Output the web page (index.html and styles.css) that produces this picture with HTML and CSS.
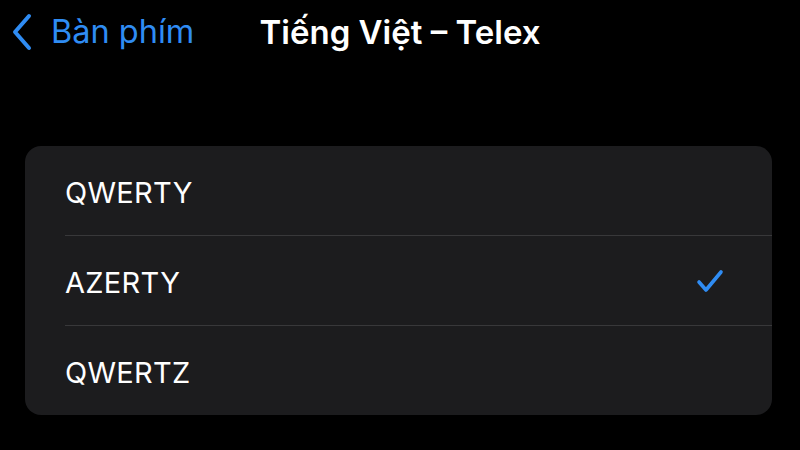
FILE: index.html
```html
<!DOCTYPE html>
<html>
  <head>
    <title>Tiếng Việt – Telex</title>
    <link rel="stylesheet" href="styles.css">
  </head>
  <body>
    <div class="nav-bar">
      <a class="nav-back" href="#">
        <svg class="nav-back-icon" width="22" height="38" viewBox="0 0 22 38">
          <path d="M18 3 L4 19 L18 35" fill="none" stroke="#2f8cf3" stroke-width="4" stroke-linecap="round" stroke-linejoin="round"/>
        </svg>
        <span>Bàn phím</span>
      </a>
      <div class="nav-title">Tiếng Việt – Telex</div>
      <div></div>
    </div>

    <div class="layout-list">
      <div class="layout-row">
        <span class="layout-label">QWERTY</span>
      </div>
      <div class="layout-row selected">
        <span class="layout-label">AZERTY</span>
        <svg class="layout-check" width="28" height="26" viewBox="0 0 28 26">
          <path d="M3 14 L10 22 L25 4" fill="none" stroke="#2f8cf3" stroke-width="3.6" stroke-linecap="round" stroke-linejoin="round"/>
        </svg>
      </div>
      <div class="layout-row">
        <span class="layout-label">QWERTZ</span>
      </div>
    </div>
  </body>
</html>
```

FILE: styles.css
```css
/* Keyboard layout settings */
body {
  margin: 0;
  background: #000000;
  color: #ffffff;
  font-family: Inter, "Noto Sans", sans-serif;
  width: 800px;
  height: 450px;
  overflow: hidden;
}

.nav-bar {
  display: grid;
  grid-template-columns: 1fr auto 1fr;
  align-items: center;
  height: 66px;
}

.nav-back {
  display: flex;
  align-items: center;
  gap: 18px;
  padding-left: 11px;
  color: #2f8cf3;
  text-decoration: none;
  font-size: 32.5px;
  line-height: 1;
  padding-bottom: 2px;
}

.nav-title {
  font-size: 33px;
  font-weight: 600;
  line-height: 1;
  padding-bottom: 2px;
}

.layout-list {
  margin: 80px 28px 0 25px;
  background: #1c1c1e;
  border-radius: 16px;
  overflow: hidden;
}

.layout-row {
  display: flex;
  align-items: center;
  justify-content: space-between;
  height: 89px;
  margin-left: 40px;
  padding-right: 48px;
  border-bottom: 1px solid #38383a;
}

.layout-row:last-child {
  border-bottom: none;
}

.layout-label {
  font-size: 29px;
  letter-spacing: 0.3px;
  padding-top: 3px;
}
```
